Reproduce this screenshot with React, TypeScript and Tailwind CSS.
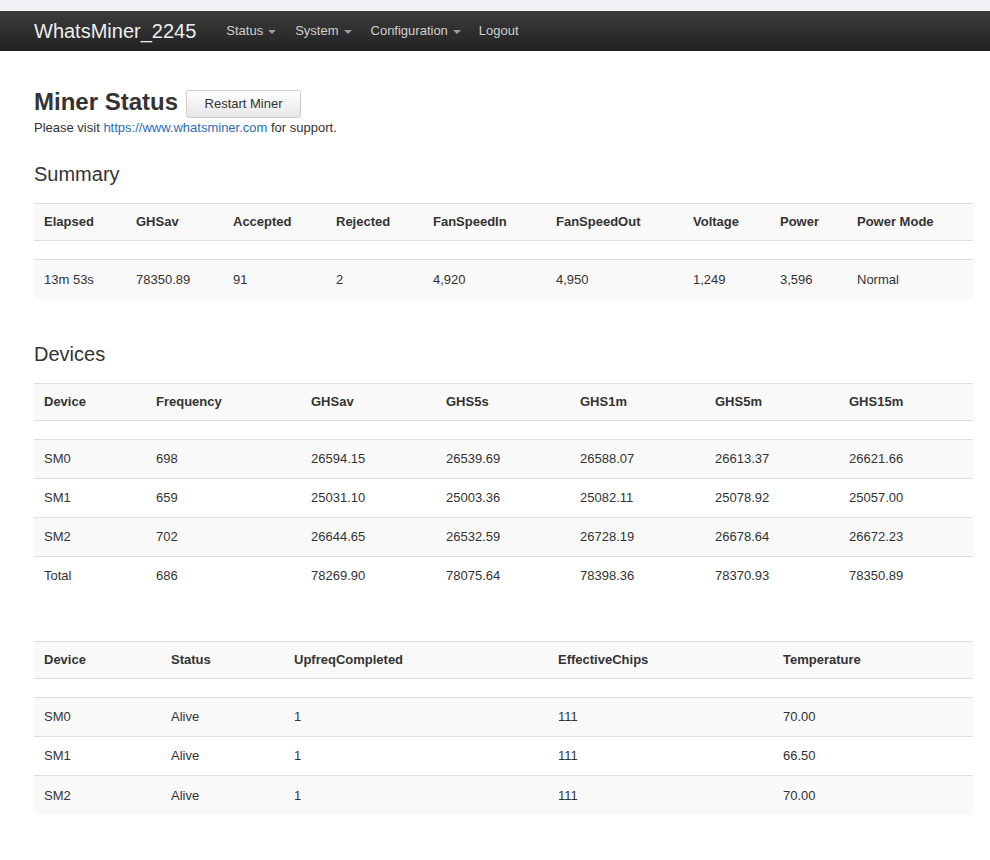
import React from "react";

const font = { fontFamily: '"Liberation Sans", Arial, sans-serif' };

type Col = { label: string; w: number };

function Caret() {
  return (
    <span className="ml-[5px] inline-block h-0 w-0 border-x-[4px] border-t-[4px] border-x-transparent border-t-[#9d9d9d] align-middle" />
  );
}

function DataTable({ cols, rows }: { cols: Col[]; rows: string[][] }) {
  return (
    <table className="w-full table-fixed border-collapse text-[13px] text-[#333]">
      <colgroup>
        {cols.map((c) => (
          <col key={c.label} style={{ width: c.w }} />
        ))}
      </colgroup>
      <thead>
        <tr className="h-[37px] border-y border-[#ddd] bg-[#f9f9f9]">
          {cols.map((c) => (
            <th key={c.label} className="px-[10px] text-left font-bold">
              {c.label}
            </th>
          ))}
        </tr>
      </thead>
      <tbody>
        <tr className="h-[19px] border-b border-[#ddd]">
          <td colSpan={cols.length} />
        </tr>
        {rows.map((r, i) => (
          <tr
            key={i}
            className={
              "h-[39px] " +
              (i % 2 === 0 ? "bg-[#f9f9f9]" : "bg-white") +
              (i < rows.length - 1 ? " border-b border-[#ddd]" : "")
            }
          >
            {r.map((v, j) => (
              <td key={j} className="px-[10px]">
                {v}
              </td>
            ))}
          </tr>
        ))}
      </tbody>
    </table>
  );
}

export default function App() {
  return (
    <div className="min-h-[860px] bg-white" style={font}>
      <div className="h-[11px] bg-[#f1f2f6]" />
      {/* Navbar */}
      <div className="flex h-[40px] items-center bg-gradient-to-b from-[#3c3c3c] to-[#222] pl-[34px]">
        <span className="text-[20px] text-[#eee]">WhatsMiner_2245</span>
        <nav className="ml-[30px] flex items-center gap-[19px] text-[13px] text-[#cfcfcf]">
          <span>
            Status
            <Caret />
          </span>
          <span>
            System
            <Caret />
          </span>
          <span>
            Configuration
            <Caret />
          </span>
          <span className="-ml-[1px]">Logout</span>
        </nav>
      </div>

      <div className="pl-[34px] pr-[17px]">
        {/* Header */}
        <div className="mt-[35px] flex items-center">
          <h1 className="text-[24px] font-bold leading-[28px] text-[#333]">Miner Status</h1>
          <button className="ml-[8px] mt-[4px] h-[28px] w-[115px] rounded-[3px] border border-[#ccc] bg-gradient-to-b from-white to-[#e6e6e6] text-[13px] text-[#333]">
            Restart Miner
          </button>
        </div>
        <p className="mt-[1px] text-[13px] leading-[17px] text-[#333]">
          Please visit <span className="text-[#2a6db5]">https://www.whatsminer.com</span> for support.
        </p>

        <h2 className="mt-[26px] text-[20px] leading-[24px] text-[#333]">Summary</h2>
        <div className="mt-[17px]">
          <DataTable
            cols={[
              { label: "Elapsed", w: 92 },
              { label: "GHSav", w: 97 },
              { label: "Accepted", w: 103 },
              { label: "Rejected", w: 97 },
              { label: "FanSpeedIn", w: 123 },
              { label: "FanSpeedOut", w: 137 },
              { label: "Voltage", w: 87 },
              { label: "Power", w: 77 },
              { label: "Power Mode", w: 126 },
            ]}
            rows={[["13m 53s", "78350.89", "91", "2", "4,920", "4,950", "1,249", "3,596", "Normal"]]}
          />
        </div>

        <h2 className="mt-[43px] text-[20px] leading-[24px] text-[#333]">Devices</h2>
        <div className="mt-[17px]">
          <DataTable
            cols={[
              { label: "Device", w: 112 },
              { label: "Frequency", w: 155 },
              { label: "GHSav", w: 135 },
              { label: "GHS5s", w: 134 },
              { label: "GHS1m", w: 135 },
              { label: "GHS5m", w: 134 },
              { label: "GHS15m", w: 134 },
            ]}
            rows={[
              ["SM0", "698", "26594.15", "26539.69", "26588.07", "26613.37", "26621.66"],
              ["SM1", "659", "25031.10", "25003.36", "25082.11", "25078.92", "25057.00"],
              ["SM2", "702", "26644.65", "26532.59", "26728.19", "26678.64", "26672.23"],
              ["Total", "686", "78269.90", "78075.64", "78398.36", "78370.93", "78350.89"],
            ]}
          />
        </div>

        <div className="mt-[46px]">
          <DataTable
            cols={[
              { label: "Device", w: 127 },
              { label: "Status", w: 123 },
              { label: "UpfreqCompleted", w: 264 },
              { label: "EffectiveChips", w: 225 },
              { label: "Temperature", w: 200 },
            ]}
            rows={[
              ["SM0", "Alive", "1", "111", "70.00"],
              ["SM1", "Alive", "1", "111", "66.50"],
              ["SM2", "Alive", "1", "111", "70.00"],
            ]}
          />
        </div>
      </div>
    </div>
  );
}
